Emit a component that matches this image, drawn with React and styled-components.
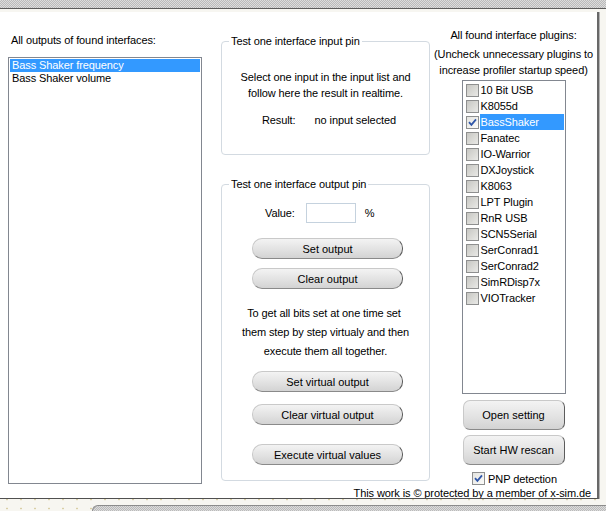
import React from 'react';
import styled, { createGlobalStyle, css } from 'styled-components';

const GlobalStyle = createGlobalStyle`
  html, body { margin: 0; padding: 0; }
  body {
    font-family: "Liberation Sans", Arial, sans-serif;
    font-size: 11px;
    letter-spacing: -0.1px;
    color: #000;
  }
`;

// gray checker fill used for the host window chrome
const dither = css`
  background-color: #cbcbcb;
  background-image: repeating-conic-gradient(#bababa 0 25%, #dcdcdc 0 50%);
  background-size: 2px 2px;
`;

const Screen = styled.div`
  width: 606px;
  height: 511px;
  overflow: hidden;
  display: flex;
  flex-direction: column;
  background-color: #f7f6f1;
  background-image: radial-gradient(circle, #d9cfa6 0.7px, transparent 1.2px);
  background-size: 14px 9px;
`;

const TopBand = styled.div`
  flex: none;
  height: 8px;
  border-bottom: 1px solid #5b5b5b;
  ${dither};
`;

const Panel = styled.div`
  flex: none;
  margin-top: 3px;
  width: 597px;
  height: 486px;
  background: #fff;
  border-right: 2px solid #686868;
  border-bottom: 1px solid #505050;
  box-shadow: 1px 0 0 #b4b4b4;
  display: flex;
  flex-direction: column;
`;

const Tray = styled.div`
  flex: none;
  margin: 6px 0 0 92px;
  height: 10px;
  border-top: 1px solid #8c8c8c;
  border-left: 1px solid #8c8c8c;
  border-top-left-radius: 6px;
  ${dither};
`;

const Columns = styled.div`
  flex: none;
  height: 475px;
  display: flex;
`;

const Footer = styled.div`
  flex: none;
  height: 11px;
  overflow: hidden;
  line-height: 13px;
  text-align: right;
  padding-right: 6px;
  white-space: nowrap;
`;

/* left column: outputs list */

const LeftColumn = styled.div`
  width: 194px;
  margin-left: 8px;
  display: flex;
  flex-direction: column;
`;

const Caption = styled.div`
  margin-top: ${p => p.$top || 0}px;
  line-height: 13px;
  padding-left: ${p => p.$indent || 0}px;
  white-space: nowrap;
`;

const ListBox = styled.div`
  margin-top: 10px;
  height: 427px;
  box-sizing: border-box;
  border: 1px solid #828790;
  padding: 1px;
  background: #fff;
`;

const ListItem = styled.div`
  height: 13px;
  line-height: 13px;
  padding-left: 2px;
  white-space: nowrap;
  background: ${p => (p.$selected ? '#3399ff' : 'transparent')};
  color: ${p => (p.$selected ? '#fff' : '#000')};
`;

/* middle column: pin testers */

const MiddleColumn = styled.div`
  width: 209px;
  margin-left: 19px;
  display: flex;
  flex-direction: column;
`;

const GroupBox = styled.fieldset`
  margin: ${p => p.$top}px 0 0 0;
  padding: 0;
  min-width: 0;
  border: 1px solid #d3dae1;
  border-radius: 4px;
`;

const GroupTitle = styled.legend`
  margin-left: 7px;
  padding: 0 2px;
  line-height: 12px;
  font-size: 11px;
`;

const GroupBody = styled.div`
  display: flex;
  flex-direction: column;
  align-items: center;
  padding: ${p => p.$pad};
`;

const Note = styled.div`
  margin-top: ${p => p.$top || 0}px;
  line-height: ${p => p.$line || 16}px;
  text-align: center;
  white-space: nowrap;
`;

const ResultRow = styled.div`
  margin-top: 11px;
  line-height: 16px;
  display: flex;
  align-self: flex-start;
  padding-left: 40px;
`;

const ResultValue = styled.span`
  margin-left: 19px;
`;

const ValueRow = styled.div`
  align-self: flex-start;
  padding-left: 43px;
  height: 20px;
  display: flex;
  align-items: center;
`;

const ValueInput = styled.input`
  box-sizing: border-box;
  width: 50px;
  height: 20px;
  margin: 0 9px 0 11px;
  padding: 0 2px;
  border: 1px solid #c5d2de;
  font: inherit;
  outline: none;
`;

const PillButton = styled.button`
  box-sizing: border-box;
  width: 151px;
  height: 21px;
  margin: ${p => p.$top}px 0 0 4px;
  padding: 0;
  font: inherit;
  font-weight: normal;
  color: #000;
  border: 1px solid #c9c9c9;
  border-right-color: #5c5c5c;
  border-bottom-color: #8a8a8a;
  border-radius: 10px;
  background: linear-gradient(#f3f3f3, #e2e2e2 55%, #d3d3d3);
  cursor: default;
`;

/* right column: plugin list */

const RightColumn = styled.div`
  flex: 1;
  display: flex;
  flex-direction: column;
  align-items: center;
`;

const CheckList = styled.div`
  margin-top: 2px;
  width: 104px;
  height: 314px;
  box-sizing: border-box;
  border: 1px solid #828790;
  padding: 1px;
  background: #fff;
`;

const CheckRow = styled.div`
  height: 16px;
  display: flex;
  align-items: center;
`;

const Box = styled.span`
  flex: none;
  box-sizing: border-box;
  width: 13px;
  height: 13px;
  margin: 0 1px 0 ${p => p.$indent || 0}px;
  border: 1px solid #8e8f8f;
  background: ${p =>
    p.$light
      ? 'linear-gradient(135deg, #e4e4e0, #fbfbf9)'
      : 'linear-gradient(135deg, #c7c7c3, #e9e9e6)'};
  display: flex;
  align-items: center;
  justify-content: center;
`;

const RowLabel = styled.span`
  flex: 1;
  height: 16px;
  line-height: 16px;
  padding-left: 1px;
  white-space: nowrap;
  background: ${p => (p.$selected ? '#3399ff' : 'transparent')};
  color: ${p => (p.$selected ? '#fff' : '#000')};
`;

const SideButton = styled.button`
  box-sizing: border-box;
  width: 102px;
  height: 30px;
  margin-top: ${p => p.$top}px;
  padding: 0;
  font: inherit;
  font-weight: normal;
  color: #000;
  border: 1px solid #c9c9c9;
  border-right-color: #5c5c5c;
  border-bottom-color: #8a8a8a;
  border-radius: 7px;
  background: linear-gradient(#f3f3f3, #e3e3e3 55%, #d3d3d3);
  cursor: default;
`;

const PnpRow = styled.div`
  margin-top: 7px;
  height: 13px;
  display: flex;
  align-items: center;
  gap: 2px;
  padding-left: 2px;
`;

const Tick = () => (
  <svg width="9" height="9" viewBox="0 0 9 9">
    <path d="M1 4.2 L3.4 6.8 L8 1.4" fill="none" stroke="#2f56a8" strokeWidth="1.8" />
  </svg>
);

const CheckBox = ({ checked, indent, light }) => (
  <Box $indent={indent} $light={light || checked}>
    {checked && <Tick />}
  </Box>
);

const plugins = [
  '10 Bit USB',
  'K8055d',
  'BassShaker',
  'Fanatec',
  'IO-Warrior',
  'DXJoystick',
  'K8063',
  'LPT Plugin',
  'RnR USB',
  'SCN5Serial',
  'SerConrad1',
  'SerConrad2',
  'SimRDisp7x',
  'VIOTracker',
];

const outputs = ['Bass Shaker frequency', 'Bass Shaker volume'];

export default function App() {
  return (
    <Screen>
      <GlobalStyle />
      <TopBand />
      <Panel>
        <Columns>
          <LeftColumn>
            <Caption $top={22} $indent={3}>All outputs of found interfaces:</Caption>
            <ListBox>
              {outputs.map((o, i) => (
                <ListItem key={o} $selected={i === 0}>{o}</ListItem>
              ))}
            </ListBox>
          </LeftColumn>

          <MiddleColumn>
            <GroupBox $top={23}>
              <GroupTitle>Test one interface input pin</GroupTitle>
              <GroupBody $pad="22px 0 26px 0">
                <Note>
                  Select one input in the input list and
                  <br />
                  follow here the result in realtime.
                </Note>
                <ResultRow>
                  <span>Result:</span>
                  <ResultValue>no input selected</ResultValue>
                </ResultRow>
              </GroupBody>
            </GroupBox>

            <GroupBox $top={23}>
              <GroupTitle>Test one interface output pin</GroupTitle>
              <GroupBody $pad="13px 0 15px 0">
                <ValueRow>
                  <span>Value:</span>
                  <ValueInput defaultValue="" />
                  <span>%</span>
                </ValueRow>
                <PillButton $top={15}>Set output</PillButton>
                <PillButton $top={9}>Clear output</PillButton>
                <Note $top={15} $line={19}>
                  To get all bits set at one time set&nbsp;
                  <br />
                  them step by step virtualy and then
                  <br />
                  execute them all together.
                </Note>
                <PillButton $top={10}>Set virtual output</PillButton>
                <PillButton $top={12}>Clear virtual output</PillButton>
                <PillButton $top={19}>Execute virtual values</PillButton>
              </GroupBody>
            </GroupBox>
          </MiddleColumn>

          <RightColumn>
            <Caption $top={17}>All found interface plugins:</Caption>
            <Note $top={4}>
              (Uncheck unnecessary plugins to
              <br />
              increase profiler startup speed)
            </Note>
            <CheckList>
              {plugins.map(p => (
                <CheckRow key={p}>
                  <CheckBox indent={2} checked={p === 'BassShaker'} />
                  <RowLabel $selected={p === 'BassShaker'}>{p}</RowLabel>
                </CheckRow>
              ))}
            </CheckList>
            <SideButton $top={6}>Open setting</SideButton>
            <SideButton $top={5}>Start HW rescan</SideButton>
            <PnpRow>
              <CheckBox checked light />
              <span>PNP detection</span>
            </PnpRow>
          </RightColumn>
        </Columns>
        <Footer>This work is © protected by a member of x-sim.de</Footer>
      </Panel>
      <Tray />
    </Screen>
  );
}
